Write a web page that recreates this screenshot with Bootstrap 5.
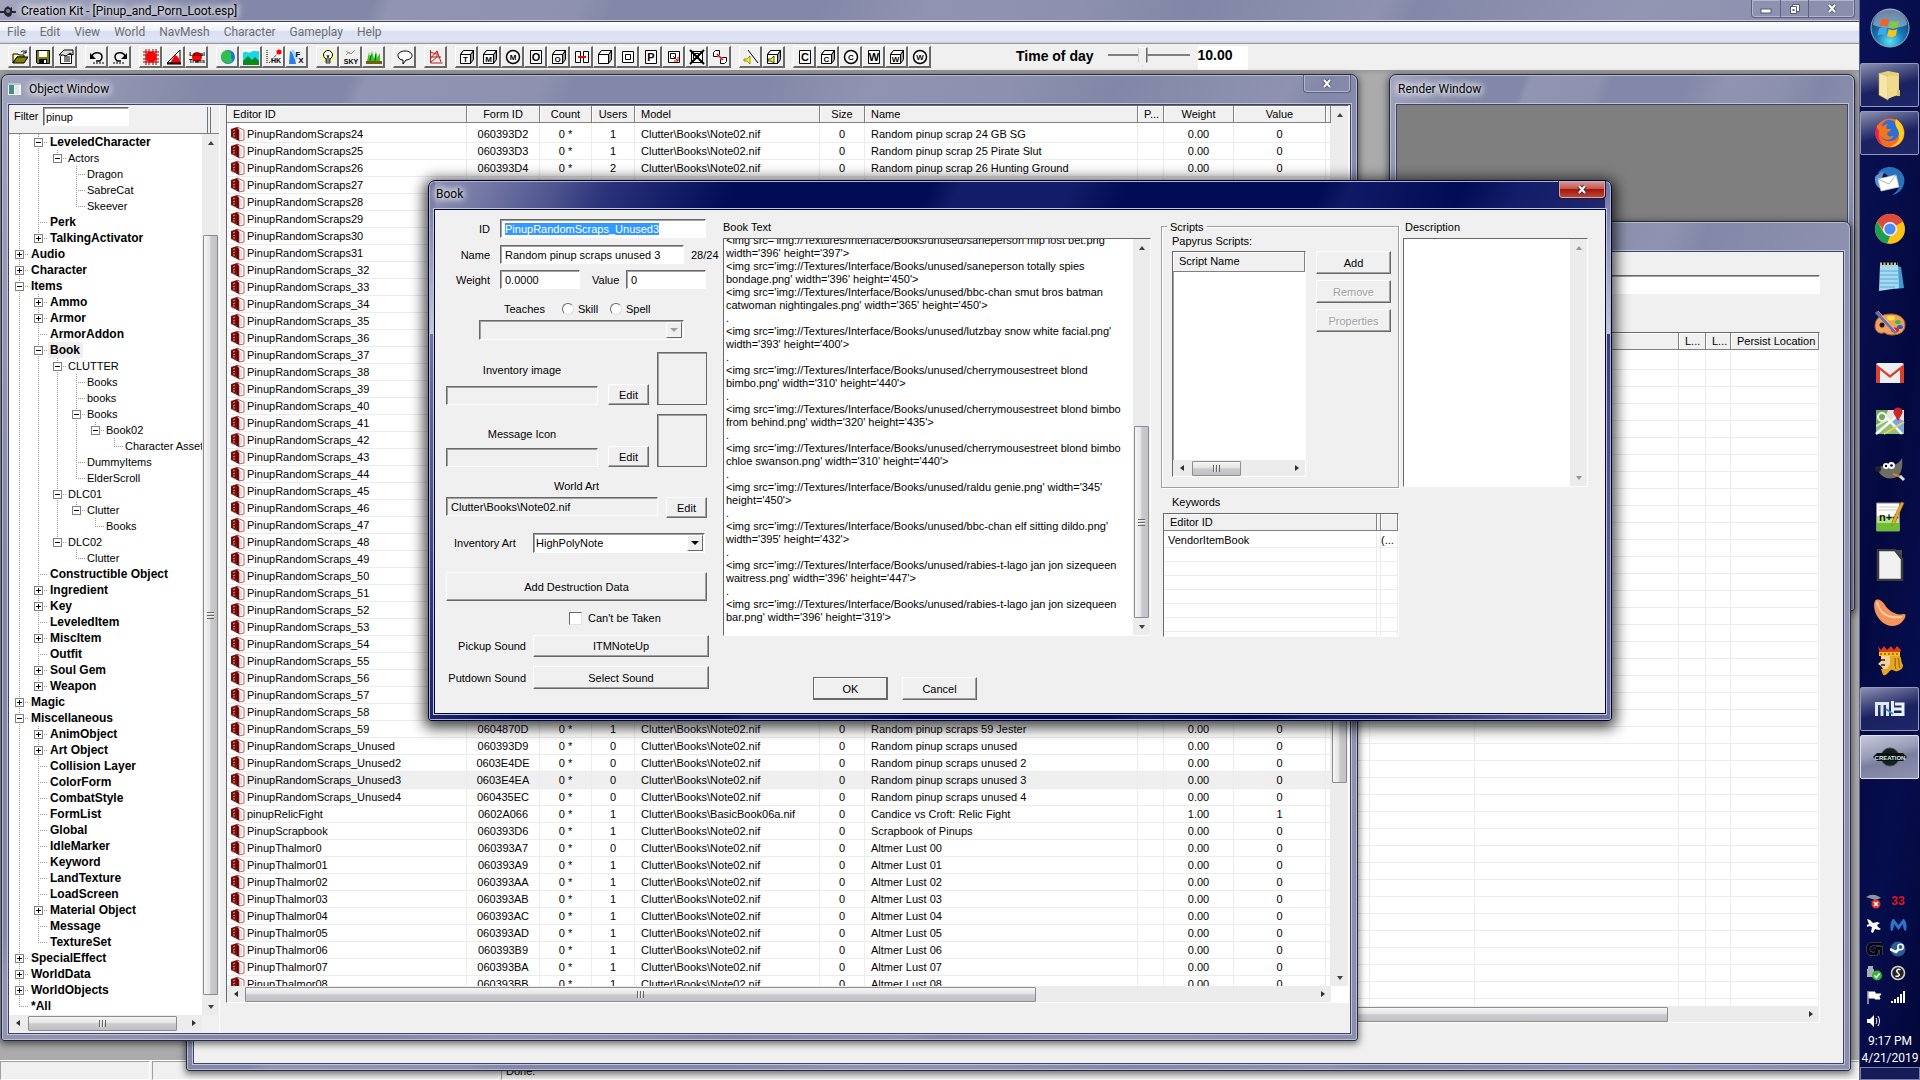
<!doctype html>
<html lang="en">
<head>
<meta charset="utf-8">
<title>Creation Kit</title>
<link href="https://cdn.jsdelivr.net/npm/bootstrap@5.3.0/dist/css/bootstrap.min.css" rel="stylesheet">
<style>
:root{--face:#f0f0f0;--navy:#030a49}
html,body{height:100%}
body{font:11px/16px "Liberation Sans",Arial,sans-serif;color:#000;background:#ababab;overflow:hidden}
button,input,select,textarea{font:inherit;color:inherit}
svg{display:block}
.seg{font-family:Roboto,"Segoe UI",sans-serif;font-size:12px}
.glass{background:linear-gradient(112deg,#a2a5bd 0,#8388a8 12%,#8388a8 20%,#9194b2 21%,#8e92b0 31%,#8388a8 33%,#8488a8 44%,#9093b1 50%,#8d91af 58%,#8287a7 64%,#8f93b1 74%,#8488a8 76%,#9396b3 88%,#8a8eac 100%)}

/* application frame */
.app-title{height:21px;border-bottom:1px solid #c9cbdc}
.app-menu{height:22px;background:linear-gradient(#fff 0,#eef1f9 40%,#dae0f2 45%,#dfe5f4 90%,#c4c9da 100%);border-top:1px solid #3e425c}
.app-menu a{color:#6d6d6d;text-decoration:none;padding:0 7px;line-height:20px}
.app-tools{height:27px;background:var(--face);padding:2px 8px 0;gap:8px;border-top:1px solid #999}
.tb{width:23px;height:22px;padding:2px 3px;border:1px solid;border-color:#fff #696969 #696969 #fff;border-right-width:2px;border-bottom-width:2px;background:var(--face)}
.tb svg{width:16px;height:16px}
.tb text{font:bold 8px "Liberation Sans",Arial,sans-serif;text-anchor:middle}
.tod{font:bold 14px/20px "Liberation Sans",Arial,sans-serif}
.tod-out{width:50px;height:24px;background:#fff;border:0;padding:0 0 6px}
.tod-range{appearance:none;width:82px;height:21px;margin:0;background:linear-gradient(#808080,#808080) 0 8px/100% 2px no-repeat}
.tod-range::-webkit-slider-thumb{appearance:none;width:10px;height:20px;background:var(--face);border:1px solid;border-color:#fff #696969 #696969 #ccc;border-right-width:2px;clip-path:polygon(0 0,100% 0,100% 75%,50% 100%,0 75%)}
.app-work{background:linear-gradient(#999 0,#ababab 5px)}
.app-status{height:20px;background:var(--face);gap:2px;border-top:1px solid #fff}
.app-status div{border:1px solid;border-color:#a0a0a0 #fff #fff #a0a0a0;line-height:18px}

/* caption buttons */
.capt{height:18px;border:1px solid #5d6180;border-top:0;border-radius:0 0 4px 4px;box-shadow:inset 0 0 0 1px #b4b7cb}
.capt button{border:0;background:none;padding:0;height:17px;display:flex;align-items:center;justify-content:center}
.capt button+button{border-left:1px solid #5d6180}
.capt.red{background:linear-gradient(#d99e97 0,#c5564b 45%,#a3170e 50%,#c44a37 100%);border-color:#3b1020}

/* windows */
.win{position:absolute;border:1px solid #262b45;border-radius:7px 7px 3px 3px;box-shadow:inset 0 0 0 1px #b9bccf,0 2px 7px 1px rgba(0,0,0,.55);padding:0 6px 6px;display:flex;flex-direction:column}
.win-title{height:29px;flex:none}
.win-client{flex:1;min-height:0;background:var(--face);border:1px solid #3d4468;outline:1px solid #c3c5d6}
.glow{text-shadow:0 0 6px #fff,0 0 8px #fff,0 0 10px #fff}
#win-object{left:1px;top:74px;width:1357px;height:967px}
#win-cell{left:186px;top:221px;width:1665px;height:850px}
#win-render{left:1389px;top:74px;width:466px;height:537px}
#win-render .win-client{background:#7f7f7f}
#win-book{left:428px;top:180px;width:1184px;height:541px;padding:0 5px 6px;border-color:#00032b;background:
 linear-gradient(#6e74a0,#c5c8dc) 0 0/6px 153px no-repeat,linear-gradient(#6e74a0,#c5c8dc) 100% 0/6px 153px no-repeat,
 linear-gradient(112deg,#8f93b4 0,#6d72a0 5%,#4f5690 9%,#2a327a 13%,#17206a 17%,#020b55 22%,#020b55 36%,#131c68 38%,#131c68 46%,#020b55 50%,#020b55 64%,#101965 66%,#020b55 74%,#131c68 78%,#1c256e 84%,#4f5690 93%,#6d72a0 100%);box-shadow:inset 0 0 0 1px #aeb3d6,0 3px 14px 4px rgba(0,0,0,.72)}
#win-book .win-title{height:28px}
#win-book .win-client{border-color:#020631}

/* sunken and raised edges */
.sunk{border:1px solid;border-color:#696969 #fff #fff #696969;box-shadow:inset 1px 1px 0 #a0a0a0}
.fld{border:1px solid;border-color:#696969 #fff #fff #696969;box-shadow:inset 1px 1px 0 #a0a0a0;background:#fff;height:19px;padding:0 4px;border-radius:0;min-width:0}
.fld:disabled,.fld[readonly].off{background:var(--face);color:#000;opacity:1}
.btn3{border:1px solid;border-color:#fff #696969 #696969 #fff;box-shadow:inset -1px -1px 0 #a0a0a0;background:var(--face);padding:0;line-height:16px}
.btn3:disabled{color:#a0a0a0;text-shadow:1px 1px 0 #fff}
.btn3.main{border-color:#696969;box-shadow:inset -1px -1px 0 #696969,inset 1px 1px 0 #fff}

/* scroll bars */
.sbv{width:17px;flex:none;background:#ececec;display:flex;flex-direction:column;align-items:center}
.sbh{height:16px;flex:none;background:#ececec;display:flex;align-items:center}
.sbv>i,.sbh>i{flex:none;display:flex;align-items:center;justify-content:center}
.sbv>i{height:17px;width:17px}.sbh>i{width:17px;height:16px}
.sbv>i::after,.sbh>i::after{content:"";border:3px solid transparent}
.up::after{border-bottom:4px solid #404040!important;border-top:0!important}
.dn::after{border-top:4px solid #404040!important;border-bottom:0!important}
.lf::after{border-right:4px solid #303030!important;border-left:0!important}
.rt::after{border-left:4px solid #303030!important;border-right:0!important}
.dim>i{opacity:.5}
.thumb{border:1px solid #8d8d8d;border-radius:1px;display:flex;align-items:center;justify-content:center}
.sbv .thumb{width:15px;background:linear-gradient(90deg,#f6f6f6 0,#e4e4e6 45%,#cacace 52%,#c2c2c6 100%)}
.sbh .thumb{height:15px;background:linear-gradient(#f6f6f6 0,#e4e4e6 45%,#cacace 52%,#c2c2c6 100%)}
.thumb::after{content:"";width:7px;height:7px;background:repeating-linear-gradient(90deg,#666 0 1px,#eee 1px 2px,transparent 2px 3px)}
.sbv .thumb::after{background:repeating-linear-gradient(#666 0 1px,#eee 1px 2px,transparent 2px 3px)}
.rest{flex:1}

/* object tree */
.pane-left{width:211px;border-right:1px solid #fff;padding-bottom:2px}
.tree-box{border-top:1px solid #808080;background:#fff}
.tree{padding:0 0 0 1px;overflow:hidden}
.tree div{display:flex;height:16px;white-space:nowrap;line-height:16px}
.tree b{font-size:12px;padding-left:2px}
.tree .lbl:not(b){padding-left:1px}
.tree .sel{background:#efefef;padding-right:3px}
.gd{width:19px;height:16px;flex:none;position:relative}
.gd.v{background:repeating-linear-gradient(#9a9a9a 0 1px,transparent 1px 2px) 9px 0/1px 100% no-repeat}
.gd.l{background:repeating-linear-gradient(#9a9a9a 0 1px,transparent 1px 2px) 9px 0/1px 8px no-repeat}
.gd.h::after{content:"";position:absolute;left:9px;right:1px;top:8px;height:1px;background:repeating-linear-gradient(90deg,#9a9a9a 0 1px,transparent 1px 2px)}
.gd u{position:absolute;z-index:1;left:5px;top:4px;width:9px;height:9px;border:1px solid #808080;background:linear-gradient(#000,#000) 1px 3px/5px 1px no-repeat #fff}
.gd u.p{background:linear-gradient(#000,#000) 1px 3px/5px 1px no-repeat,linear-gradient(#000,#000) 3px 1px/1px 5px no-repeat #fff}

/* list views */
.lv{table-layout:fixed;border-collapse:separate;border-spacing:0;width:100%;background:#fff}
.lv th{height:17px;padding:0 6px;font-weight:400;background:var(--face);border-right:1px solid #808080;border-bottom:1px solid #808080;box-shadow:inset 1px 1px 0 #fff;line-height:15px;white-space:nowrap;overflow:hidden}
.lv td{height:17px;padding:0 6px;line-height:16px;border-right:1px solid #ececec;border-bottom:1px solid #ececec;white-space:nowrap;overflow:hidden}
.lv .gap td{height:3px;padding:0;border-bottom-color:#fff}
.lv .on td{background:#efefef}
.lv .on td:first-child{background:linear-gradient(90deg,#fff 19px,#efefef 19px)}
.lv .ctr{text-align:center}
.lv .ico{padding-left:3px}
.lv .ico svg{display:inline-block;vertical-align:top;margin-right:2px;width:15px;height:16px}
#list-box{width:1123px;height:898px}
#kw td{height:14px;line-height:13px}
#kw .gap td{height:3px;line-height:1px}
.scripts .lv th{height:18px;line-height:19px}

/* book dialog */
.bk{padding:9px 11px 0}
.bk-a{width:277px}.bk-a label,.bk-a .lb{white-space:nowrap}
.bk-a .cap{width:44px;text-align:right;margin-right:10px}
.thumbbox{width:50px;border:1px solid #696969;box-shadow:inset 1px 1px 0 #a0a0a0}
.rdo{appearance:none;width:12px;height:12px;margin:0;border-radius:50%;background:#fff;border:1px solid;border-color:#696969 #ddd #ddd #696969}
.chk{appearance:none;width:13px;height:13px;margin:0;background:#fff;border:1px solid;border-color:#696969 #e3e3e3 #e3e3e3 #696969}
.cmb{position:relative;height:20px}
.cmb select{width:100%;height:20px;appearance:none;padding:0 2px}
.cmb span{position:absolute;right:2px;top:2px;width:16px;height:16px;pointer-events:none;background:var(--face);border:1px solid;border-color:#fff #696969 #696969 #fff;display:flex;align-items:center;justify-content:center}
.cmb span::after{content:"";border:4px solid transparent;border-top-color:#000;border-bottom:0}
.cmb.off span::after{border-top-color:#a0a0a0}
.bk-b{width:428px}
.edit-box{background:#fff;height:398px}
.edit-box textarea{border:0;resize:none;overflow:hidden;white-space:pre;line-height:13px;padding:0 2px;background:#fff;outline:0;flex:1;min-width:0}
.bk-c{width:238px}
.scripts{border:1px solid #a0a0a0;height:262px;position:relative;padding:6px 7px 0 10px;box-shadow:inset 1px 1px 0 #fff,1px 1px 0 #fff}
.scripts legend{position:absolute;left:5px;top:-8px;width:auto;font-size:11px;line-height:16px;background:var(--face);padding:0 3px;margin:0}
#f-id::selection{background:#3399ff;color:#fff}

/* task bar */
.task{width:61px;background:linear-gradient(100deg,#0a1258 0,#03093f 45%,#060d4d 70%,#020738 100%);border-left:1px solid #5b638f;box-shadow:-1px 0 0 #05082c}
.task button{width:59px;height:44px;margin:2px 0;border:1px solid transparent;background:none;padding:0;display:flex;align-items:center;justify-content:center;border-radius:2px}
.task button.run{border-color:#9499b8;background:linear-gradient(165deg,#8d91b0 0,#4b5284 30%,#1a2160 55%,#20276a 100%)}
.task button.cur{border-color:#dfe1ec;background:linear-gradient(165deg,#c6c8d8 0,#9a9db7 40%,#7b7f9f 55%,#8f93ae 100%)}
.tray{display:grid;grid-template-columns:24px 24px;row-gap:8px;padding-left:2px}
.tray span{height:16px;display:flex;align-items:center;justify-content:center}
.clock{color:#fff;line-height:17px}
.show-desk{height:13px;border:1px solid #7a80a8;background:#141b56}
</style>
</head>
<body class="d-flex">

<div class="d-flex flex-column flex-grow-1 position-relative overflow-hidden">
  <header class="app-title glass seg d-flex align-items-start ps-0">
    <svg class="mt-1" width="16" height="14" viewBox="0 0 16 14"><path d="M0 7h4l1-3 3-2 2 2 2-1v4h4v2h-4l-1 3-3 1-3-2-1-2H0z" fill="#23262e"/><circle cx="8" cy="7" r="2" fill="#7d8494"/></svg>
    <span class="glow" style="line-height:22px;margin-left:5px">Creation Kit - [Pinup_and_Porn_Loot.esp]</span>
    <div class="capt d-flex ms-auto me-1">
      <button style="width:28px" aria-label="Minimize"><svg width="12" height="10"><rect x="1" y="5" width="10" height="4" fill="#fff" stroke="#555a75"/></svg></button>
      <button style="width:28px" aria-label="Restore"><svg width="12" height="12"><path d="M3.500 1.500h7v7h-7z" fill="#fff" stroke="#555a75"/><path d="M1.500 3.500h6v7h-6z" fill="#fff" stroke="#555a75"/><path d="M3.500 6h2v2h-2z" fill="#555a75"/></svg></button>
      <button style="width:46px" aria-label="Close"><svg width="12" height="11"><path d="M3 2l6 7M9 2L3 9" stroke="#555a75" stroke-width="4"/><path d="M3 2l6 7M9 2L3 9" stroke="#fff" stroke-width="2"/></svg></button>
    </div>
  </header>
  <nav class="app-menu seg d-flex">
    <a href="#">File</a><a href="#">Edit</a><a href="#">View</a><a href="#">World</a><a href="#">NavMesh</a><a href="#">Character</a><a href="#">Gameplay</a><a href="#">Help</a>
  </nav>
  <div class="app-tools d-flex align-items-start" id="tools">
    <label class="tod order-last" for="tod" style="margin-left:77px">Time of day</label>
    <input class="tod-range order-last" style="margin-left:6px" type="range" id="tod" min="0" max="24" value="10">
    <input class="tod tod-out order-last" value="10.00" aria-label="Hour">
  </div>
  <main class="app-work flex-grow-1"></main>
  <footer class="app-status d-flex"><div style="width:150px"></div><div style="width:347px"></div><div class="flex-grow-1 ps-1">Done.</div></footer>

  <section class="win glass" id="win-render">
    <div class="win-title seg d-flex"><span class="glow" style="line-height:28px;margin-left:2px">Render Window</span></div>
    <div class="win-client"></div>
  </section>

  <section class="win glass" id="win-cell">
    <div class="win-title"></div>
    <div class="win-client ps-2 d-flex flex-column">
      <input class="fld" aria-label="Cell filter" style="width:1618px;margin-top:23px">
      <div class="sunk d-flex flex-column" style="width:1618px;height:691px;margin-top:38px">
        <div class="flex-grow-1 overflow-hidden bg-white"><table class="lv" id="cells"><colgroup><col style="width:1167px"><col style="width:105px"><col style="width:204px"><col style="width:27px"><col style="width:25px"><col></colgroup>
          <thead><tr><th></th><th></th><th></th><th class="ctr">L...</th><th class="ctr">L...</th><th class="ctr">Persist Location</th></tr></thead><tbody></tbody></table></div>
        <div class="sbh"><i class="lf"></i><div class="thumb" style="width:1448px"></div><span class="rest"></span><i class="rt"></i></div>
      </div>
    </div>
  </section>

  <section class="win glass" id="win-object">
    <div class="win-title seg d-flex align-items-start">
      <svg class="me-2 mt-2" width="13" height="12"><path d="M0 0h13v12H0z" fill="#f4f4f4"/><path d="M0 0h13v2H0z" fill="#b9c6d6"/><path d="M1 2h5v9H1z" fill="#3f8f83"/><path d="M7 2h4v9H7z" fill="#dfe7ea"/></svg>
      <span class="glow" style="line-height:28px">Object Window</span>
      <div class="capt ms-auto"><button style="width:46px" aria-label="Close"><svg width="12" height="11"><path d="M3 2l6 7M9 2L3 9" stroke="#555a75" stroke-width="4"/><path d="M3 2l6 7M9 2L3 9" stroke="#fff" stroke-width="2"/></svg></button></div>
    </div>
    <div class="win-client d-flex">
      <div class="pane-left d-flex flex-column">
        <div class="d-flex align-items-start" style="height:28px;padding:2px 0 0 5px">
          <label for="flt" style="width:29px;line-height:18px">Filter</label><input class="fld" id="flt" value="pinup" style="width:86px;padding:0 2px">
          <span class="ms-auto me-2 border-start border-end border-secondary h-100" style="width:4px"></span>
        </div>
        <div class="tree-box flex-grow-1 d-flex" style="min-height:0">
          <div class="tree flex-grow-1" id="tree"></div>
          <div class="sbv"><i class="up"></i><div class="thumb" style="height:760px;margin-top:84px"></div><span class="rest"></span><i class="dn"></i></div>
        </div>
        <div class="sbh" style="margin-right:17px"><i class="lf"></i><div class="thumb" style="width:149px;margin-left:2px"></div><span class="rest"></span><i class="rt"></i></div>
      </div>
      <div class="sunk d-flex flex-column bg-white" id="list-box" style="margin-left:6px">
        <div class="d-flex flex-grow-1" style="min-height:0">
          <div class="flex-grow-1 overflow-hidden"><table class="lv" id="forms"><colgroup><col style="width:240px"><col style="width:73px"><col style="width:52px"><col style="width:43px"><col style="width:185px"><col style="width:45px"><col style="width:273px"><col style="width:26px"><col style="width:70px"><col style="width:92px"><col></colgroup>
            <thead><tr><th>Editor ID</th><th class="ctr">Form ID</th><th class="ctr">Count</th><th class="ctr">Users</th><th>Model</th><th class="ctr">Size</th><th>Name</th><th>P...</th><th class="ctr">Weight</th><th class="ctr">Value</th><th></th></tr></thead><tbody></tbody></table></div>
          <div class="sbv"><i class="up"></i><div class="thumb" style="height:483px;margin-top:177px"></div><span class="rest"></span><i class="dn"></i></div>
        </div>
        <div class="sbh" style="margin-right:17px"><i class="lf"></i><div class="thumb" style="width:791px;margin-left:1px"></div><span class="rest"></span><i class="rt"></i></div>
      </div>
    </div>
  </section>

  <section class="win" id="win-book">
    <div class="win-title seg d-flex align-items-start ps-0">
      <span class="glow" style="line-height:27px;margin-left:2px">Book</span>
      <div class="capt red ms-auto"><button style="width:46px" aria-label="Close"><svg width="12" height="11"><path d="M3 2l6 7M9 2L3 9" stroke="#4a2a3a" stroke-width="4"/><path d="M3 2l6 7M9 2L3 9" stroke="#fff" stroke-width="2"/></svg></button></div>
    </div>
    <form class="win-client bk d-flex align-items-start" onsubmit="return false">
      <div class="bk-a">
        <div class="d-flex align-items-center"><label class="cap" for="f-id">ID</label><input class="fld" id="f-id" value="PinupRandomScraps_Unused3" style="width:206px"></div>
        <div class="d-flex align-items-center" style="margin-top:7px"><label class="cap" for="f-name">Name</label><input class="fld" id="f-name" value="Random pinup scraps unused 3" style="width:184px"><span class="lb" style="margin-left:7px">28/24</span></div>
        <div class="d-flex align-items-center" style="margin-top:6px"><label class="cap" for="f-w">Weight</label><input class="fld" id="f-w" value="0.0000" style="width:80px"><label for="f-v" style="margin-left:12px;width:34px">Value</label><input class="fld" id="f-v" value="0" style="width:80px"></div>
        <div class="d-flex align-items-center" style="margin:12px 0 3px 58px"><span class="lb" style="width:58px">Teaches</span><input class="rdo" type="radio" name="teach" id="t1"><label for="t1" style="width:36px;padding-left:4px">Skill</label><input class="rdo" type="radio" name="teach" id="t2"><label for="t2" style="padding-left:4px">Spell</label></div>
        <div class="cmb off" style="width:205px;margin-left:33px"><select class="fld" disabled aria-label="Taught skill or spell"><option></option></select><span></span></div>
        <div class="d-flex align-items-end" style="margin-top:12px;height:53px"><div style="width:152px"><label class="d-block text-center mb-2" for="f-inv">Inventory image</label><input class="fld off w-100 d-block" id="f-inv" readonly></div><button class="btn3" style="width:41px;height:21px;margin:0 8px 0 10px">Edit</button><div class="thumbbox h-100"></div></div>
        <div class="d-flex align-items-end" style="margin-top:9px;height:53px"><div style="width:152px"><label class="d-block text-center" for="f-msg" style="margin-bottom:6px">Message Icon</label><input class="fld off w-100 d-block" id="f-msg" readonly></div><button class="btn3" style="width:41px;height:21px;margin:0 8px 0 10px">Edit</button><div class="thumbbox h-100"></div></div>
        <label class="d-block text-center" for="f-art" style="width:261px;margin:11px 0 3px">World Art</label>
        <div class="d-flex"><input class="fld off" id="f-art" readonly value="Clutter\Books\Note02.nif" style="width:212px"><button class="btn3" style="width:41px;height:21px;margin-left:8px">Edit</button></div>
        <div class="d-flex align-items-center" style="margin-top:15px;padding-left:8px"><label for="f-ia" style="width:79px">Inventory Art</label><div class="cmb" style="width:172px"><select class="fld" id="f-ia"><option>HighPolyNote</option></select><span></span></div></div>
        <button class="btn3" style="width:261px;height:29px;margin-top:19px">Add Destruction Data</button>
        <div class="d-flex align-items-center" style="margin:9px 0 9px 123px"><input class="chk" type="checkbox" id="f-ct"><label for="f-ct" style="padding-left:6px">Can't be Taken</label></div>
        <div class="d-flex align-items-center"><span class="lb text-end" style="width:80px">Pickup Sound</span><button class="btn3" style="width:176px;height:22px;margin-left:7px">ITMNoteUp</button></div>
        <div class="d-flex align-items-center" style="margin-top:9px"><span class="lb text-end" style="width:80px">Putdown Sound</span><button class="btn3" style="width:176px;height:23px;margin-left:7px">Select Sound</button></div>
      </div>
      <div class="bk-b">
        <label for="f-txt" class="d-block">Book Text</label>
        <div class="edit-box sunk d-flex" style="margin-top:3px"><textarea id="f-txt" spellcheck="false">&lt;img src='img://Textures/Interface/Books/unused/saneperson mlp lost bet.png'
width='396' height='397'&gt;
&lt;img src='img://Textures/Interface/Books/unused/saneperson totally spies
bondage.png' width='396' height='450'&gt;
&lt;img src='img://Textures/Interface/Books/unused/bbc-chan smut bros batman
catwoman nightingales.png' width='365' height='450'&gt;
.
&lt;img src='img://Textures/Interface/Books/unused/lutzbay snow white facial.png'
width='393' height='400'&gt;
.
&lt;img src='img://Textures/Interface/Books/unused/cherrymousestreet blond
bimbo.png' width='310' height='440'&gt;
.
&lt;img src='img://Textures/Interface/Books/unused/cherrymousestreet blond bimbo
from behind.png' width='320' height='435'&gt;
.
&lt;img src='img://Textures/Interface/Books/unused/cherrymousestreet blond bimbo
chloe swanson.png' width='310' height='440'&gt;
.
&lt;img src='img://Textures/Interface/Books/unused/raldu genie.png' width='345'
height='450'&gt;
.
&lt;img src='img://Textures/Interface/Books/unused/bbc-chan elf sitting dildo.png'
width='395' height='432'&gt;
.
&lt;img src='img://Textures/Interface/Books/unused/rabies-t-lago jan jon sizequeen
waitress.png' width='396' height='447'&gt;
.
&lt;img src='img://Textures/Interface/Books/unused/rabies-t-lago jan jon sizequeen
bar.png' width='396' height='319'&gt;

</textarea><div class="sbv"><i class="up"></i><div class="thumb" style="height:192px;margin-top:170px"></div><span class="rest"></span><i class="dn"></i></div></div>
        <div class="d-flex" style="margin:41px 0 0 90px;gap:14px"><button class="btn3 main" style="width:75px;height:23px">OK</button><button class="btn3" style="width:75px;height:23px">Cancel</button></div>
      </div>
      <div class="bk-c" style="margin:7px 4px 0 10px">
        <fieldset class="scripts"><legend>Scripts</legend>
          <span>Papyrus Scripts:</span>
          <div class="d-flex align-items-start" style="gap:10px;margin-top:2px">
            <div class="sunk bg-white d-flex flex-column" style="width:134px;height:226px"><table class="lv"><thead><tr><th>Script Name</th></tr></thead></table><div class="sbh mt-auto"><i class="lf"></i><div class="thumb" style="width:49px;margin-left:2px"></div><span class="rest"></span><i class="rt"></i></div></div>
            <div class="d-flex flex-column" style="gap:6px"><button class="btn3" style="width:75px;height:23px">Add</button><button class="btn3" disabled style="width:75px;height:23px">Remove</button><button class="btn3" disabled style="width:75px;height:23px">Properties</button></div>
          </div>
        </fieldset>
        <div style="margin:6px 0 3px 11px">Keywords</div>
        <div class="sunk bg-white overflow-hidden" style="height:124px;margin-left:2px"><table class="lv" id="kw"><colgroup><col style="width:213px"><col style="width:4px"><col></colgroup><thead><tr><th>Editor ID</th><th class="p-0"></th><th></th></tr></thead><tbody></tbody></table></div>
      </div>
      <div style="width:185px">
        <label for="f-d" class="d-block" style="margin-left:2px">Description</label>
        <div class="edit-box sunk d-flex" style="margin-top:3px;height:249px"><textarea id="f-d"></textarea><div class="sbv dim"><i class="up"></i><span class="rest"></span><i class="dn"></i></div></div>
      </div>
    </form>
  </section>
</div>

<aside class="task d-flex flex-column">
  <div class="d-flex justify-content-center" style="height:61px;padding-top:8px">
    <svg width="40" height="40" viewBox="0 0 40 40"><defs><radialGradient id="orb" cx=".5" cy=".85" r=".8"><stop offset="0" stop-color="#5fe0f4"/><stop offset=".45" stop-color="#1779b4"/><stop offset="1" stop-color="#13305e"/></radialGradient></defs><circle cx="20" cy="20" r="19" fill="url(#orb)" stroke="#8fb6d3"/><path d="M3 17a17 16 0 0 1 34 0c-9 4-25 4-34 0z" fill="#dfeaf4" opacity=".45"/><path d="M11 12c3-2 6-1.500 8 0l-1.500 7c-2-1.500-5-2-8 0z" fill="#f0632a"/><path d="M20.500 12.500c3 2 6 1.500 8.500 0L27.500 19.500c-3 1.500-6 1.500-8.500 0z" fill="#8cc63e"/><path d="M9 20.500c3-1.800 6-1.500 8 0l-1.500 7c-2.500-1.500-5-1.500-8 0z" fill="#3fa9e8"/><path d="M18.800 21c2.500 1.800 6 1.500 8.500 0l-1.800 7c-3 1.600-6 1.500-8.300 0z" fill="#fcc419"/></svg>
  </div>
  <button class="run" aria-label="Explorer"><svg width="26" height="32" viewBox="0 0 26 32"><path d="M3 4l8-2 11 2v22l-11 3z" fill="#e7cf7a"/><path d="M2 4l9 3v24l-9-5z" fill="#f6e7a9" stroke="#c9ad57" stroke-width=".6"/><path d="M11 7h10v18l-10 5z" fill="#f0da8e"/><path d="M20 21h3v6h-3z" fill="#dcc06a"/></svg></button>
  <button class="run" aria-label="Firefox"><svg width="32" height="32" viewBox="0 0 32 32"><circle cx="16" cy="16" r="14.500" fill="#ff6a1f"/><path d="M14 3c8 0 11 5 11 12s-6 10-11 9c-5 0-8-4-8-8 0-6 3-12 8-13z" fill="#2a6fd6"/><path d="M22 2c6 4 8 9 8 15-1 8-7 13-14 13 7-3 10-7 9-13 0-6-6-8-3-15z" fill="#ffcf24"/><path d="M3 8c3 2 4 1 6 1 1-1 3-2 5-2-2 2-2 4-1 5h4c0 2-3 3-4 4l1 3c2 1 4 0 6 0-2 3-6 5-10 3-5-3-7-8-7-14z" fill="#f5741e"/><path d="M2 9c-2 8 0 15 7 19-4-5-5-9-4-14z" fill="#e3215c"/></svg></button>
  <button aria-label="Thunderbird"><svg width="32" height="32" viewBox="0 0 32 32"><path d="M4 8C10-1 26 0 30 12c2 9-4 17-12 18 5-3 8-7 7-11L10 8z" fill="#2a72b8"/><path d="M1 12c2-3 5-5 9-5l-3 9 3 9c-6-1-10-6-9-13z" fill="#5b92ca"/><path d="M4 14l18-4 3 12-18 4z" fill="#fff" stroke="#c6d3e2" stroke-width=".7"/><path d="M4 14l11 5 7-9" fill="none" stroke="#8ba1b8" stroke-width=".8"/></svg></button>
  <button aria-label="Chrome"><svg width="32" height="32" viewBox="0 0 32 32"><circle cx="16" cy="16" r="15" fill="#fbc116"/><path d="M16 16L3 8.500A15 15 0 0 1 29 8.500z" fill="#dd4b3e"/><path d="M16 9h13.500A15 15 0 0 0 3 8.500l7 9z" fill="#dd4b3e"/><path d="M3 8.500l7 11.500 6 3-3 7.700A15 15 0 0 1 3 8.500z" fill="#1c9e57"/><circle cx="16" cy="16" r="7" fill="#f4f4f4"/><circle cx="16" cy="16" r="5.600" fill="#4c8bf5"/></svg></button>
  <button aria-label="Notepad"><svg width="30" height="32" viewBox="0 0 30 32"><path d="M18 4l8 2 3 21-9 1z" fill="#3f9ad0"/><path d="M5 4h18l1 23-20 3z" fill="#a4dbf3"/><path d="M5 10h18M5 14h18M5 18h18M5 22h18M5 26h15" stroke="#4c9cc9" stroke-width=".8"/><path d="M5 3h18" stroke="#d9c05c" stroke-width="3" stroke-dasharray="2 1.500"/></svg></button>
  <button aria-label="Paint"><svg width="32" height="30" viewBox="0 0 32 30"><path d="M1 16C1 7 9 4 17 4s14 4 14 11-6 10-13 10-6-3-9-2-8-1-8-7z" fill="#f0a160" stroke="#a7602c"/><ellipse cx="17" cy="8" rx="4" ry="2.500" fill="#ffe13a"/><ellipse cx="24" cy="12" rx="3" ry="2" fill="#3fbf3a"/><ellipse cx="26" cy="17" rx="3" ry="2" fill="#3156d8"/><ellipse cx="21" cy="20" rx="4" ry="2.500" fill="#d82420"/><circle cx="8" cy="15" r="2.500" fill="#211"/><path d="M2 2l20 21" stroke="#6c6fae" stroke-width="3"/><path d="M4 1l18 20" stroke="#e5c48a" stroke-width="1"/></svg></button>
  <button aria-label="Gmail"><svg width="28" height="22" viewBox="0 0 28 22"><rect y="1" width="28" height="20" rx="2" fill="#eceff1"/><path d="M0 21V2l14 11L28 2v19h-4V8l-10 8L4 8v13z" fill="#d8402f"/></svg></button>
  <button aria-label="Maps"><svg width="32" height="28" viewBox="0 0 32 28"><path d="M2 3h28v24H2z" fill="#e6e3da"/><path d="M2 3h12l-4 10-8 5z" fill="#74a95b"/><path d="M2 20l13-7 15 12v2H2z" fill="#8ec07a"/><path d="M14 14l16 12V14l-9-4z" fill="#7ba8de"/><path d="M2 27L24 8M13 11l15 16" stroke="#fff" stroke-width="2.500"/><path d="M10 27L30 15" stroke="#f2cf55" stroke-width="2"/><circle cx="8" cy="10" r="4" fill="none" stroke="#f5f5f5" stroke-width="2"/><path d="M24 14l-4-7a4.500 4.500 0 1 1 8 0z" fill="#c9252b"/></svg></button>
  <button aria-label="GIMP"><svg width="32" height="26" viewBox="0 0 32 26"><path d="M4 11c6 0 8-4 12-3s8 1 12-6c1 8 0 18-8 20-9 2-14-3-17-9z" fill="#6f6c62"/><circle cx="4" cy="13" r="3" fill="#222"/><circle cx="12" cy="10" r="3" fill="#fff"/><circle cx="17.500" cy="9.500" r="3.400" fill="#fff"/><circle cx="12" cy="10" r="1.200"/><circle cx="17.500" cy="9.500" r="1.300"/><path d="M19 18l8 3" stroke="#c58a35" stroke-width="2"/><path d="M26 20l4 4" stroke="#ddd" stroke-width="3"/></svg></button>
  <button aria-label="Notepad++"><svg width="30" height="32" viewBox="0 0 30 32"><path d="M1.500 2h23v28h-23z" fill="#fdfdfd" stroke="#888"/><path d="M2 22h22v8H2z" fill="#6cc22e"/><path d="M2 15h22v7H2z" fill="#b4e28c"/><path d="M4 6h18M4 9h18" stroke="#ccc"/><text x="4" y="20" font-family="Liberation Sans,sans-serif" font-size="11" font-weight="700" fill="#111">n++</text><path d="M29 2l-9 20-3 3 0-4 9-20z" fill="#e9a52c" stroke="#8d6012" stroke-width=".5"/></svg></button>
  <button aria-label="LibreOffice"><svg width="28" height="32" viewBox="0 0 28 32"><path d="M2 1h17l7 9v21H2z" fill="#f1f1f1" stroke="#3c3c3c" stroke-width="2.500"/><path d="M19 1h7v7z" fill="#4a4a4a"/></svg></button>
  <button aria-label="Tangerine"><svg width="34" height="32" viewBox="0 0 34 32"><path d="M2 4C4 1 9 3 12 8s10 11 19 9c3 0 1 5-2 8-5 5-14 6-21-1S0 8 2 4z" fill="#f5935a"/><path d="M4 5c2 9 9 17 25 15" fill="none" stroke="#ffd1a8" stroke-width="2"/></svg></button>
  <button aria-label="Solitaire"><svg width="30" height="32" viewBox="0 0 30 32"><path d="M3 1l3 4 3-4 3 4 4-4 3 4 3-4 4 4-2 5H5z" fill="#e23a1e"/><path d="M4 7h21v4H4z" fill="#f7c21b"/><path d="M5 9h19" stroke="#7a1a08" stroke-width="1" stroke-dasharray="2 2"/><path d="M6 11h12v9l-4 4H8l-2-3-3-2 3-3z" fill="#f3d2a0"/><path d="M15 11h10c2 4 1 6 3 9 0 4-3 5-5 6-4 1-5-2-7-1-3 2-4 6-8 5l-2-6h6l3-5z" fill="#e8a722"/><path d="M20 13c1 4-1 7 1 11M23 13c2 4 0 6 2 10" fill="none" stroke="#8a5408"/><path d="M6 15h4M6 20h4" stroke="#3b1d08" stroke-width="1.500"/></svg></button>
  <button class="run" aria-label="Mod Organizer"><svg width="32" height="18" viewBox="0 0 32 18"><path d="M2.500 16V3.500h11V16M8 3v13" fill="none" stroke="#dcebf3" stroke-width="3"/><path d="M18.500 1v13.500h10.500V4h-8M18 9h10" fill="none" stroke="#e8f2f8" stroke-width="3"/><path d="M12 9l7 5" stroke="#2f8fc8" stroke-width="2"/></svg></button>
  <button class="cur" aria-label="Creation Kit"><svg width="34" height="22" viewBox="0 0 34 22"><circle cx="17" cy="11" r="9" fill="#14201f" stroke="#3b4a49"/><path d="M0 11l4-4h26l4 4-4 4H4z" fill="#0b1112"/><text x="17" y="14" text-anchor="middle" font-family="Liberation Sans,sans-serif" font-size="6" font-weight="700" fill="#d6e8e2">CREATION</text></svg></button>
  <div class="tray mt-auto mb-1">
    <span><svg width="16" height="16"><path d="M0 4c6-4 11-2 15 1L4 9l8-1z" fill="#8c94a4"/><circle cx="10" cy="11" r="4.500" fill="#d8302b"/><path d="M8 9l4 4M12 9l-4 4" stroke="#fff" stroke-width="1.500"/></svg></span>
    <span style="color:#e0141c;font-size:12px;font-weight:700">33</span>
    <span><svg width="16" height="16"><path d="M1 2l3 1 3 3 4-1 3 1-3 2 1 2 3 2-2 1-4-1-2 4-2-1 1-5-3-1-2 1 0-2 2-1z" fill="#fff"/></svg></span>
    <span><svg width="17" height="14"><path d="M1 13C-1 5 3 0 4 1l4.500 6L13 1c1-1 5 4 3 12-2 0-3-3-3-7l-4.500 6L4 6c0 4-1 7-3 7z" fill="#2e74c8"/></svg></span>
    <span><svg width="17" height="16"><path d="M15 3H7C3 3 2 6 2 8s1 5 5 5h3l1-4H8M10 7h5v7" fill="none" stroke="#6b6f88" stroke-width="4"/><path d="M15 3H7C3 3 2 6 2 8s1 5 5 5h3l1-4H8M10 7h5v7" fill="none" stroke="#000" stroke-width="3"/></svg></span>
    <span><svg width="16" height="16"><circle cx="8" cy="8" r="7.500" fill="#2a5f94"/><circle cx="10.500" cy="6" r="2.700" fill="none" stroke="#fff" stroke-width="1.500"/><path d="M0 8l6 3 3-3" stroke="#fff" stroke-width="2.500" fill="none"/></svg></span>
    <span><svg width="16" height="16"><path d="M2 1h5v3h1v8H1V4h1z" fill="#a9adb5"/><circle cx="11" cy="10.500" r="5" fill="#3daf35"/><path d="M8.500 10.500l2 2 3-4" stroke="#fff" stroke-width="1.600" fill="none"/></svg></span>
    <span><svg width="16" height="16"><circle cx="8" cy="8" r="6.500" fill="#222" stroke="#d5d5d5" stroke-width="1.500"/><path d="M10.500 5c-3-2-5 1-2.500 3s1 4-2.500 3" fill="none" stroke="#fff" stroke-width="1.500"/></svg></span>
    <span><svg width="16" height="16"><path d="M2 2v13M3 3h6v6H3zM9 5h6l-2 2.500 1 2.500H9z" fill="#fff" stroke="#fff"/></svg></span>
    <span><svg width="16" height="14"><path d="M1 11h2v2H1zM4 9h2v4H4zM7 7h2v6H7zM10 4h2v9h-2zM13 1h2v12h-2z" fill="#fff"/></svg></span>
    <span><svg width="16" height="16"><path d="M1 6h3l4-4v12l-4-4H1z" fill="#fff"/><path d="M10 5c1 2 1 4 0 6M12 3c2 3 2 7 0 10" fill="none" stroke="#fff"/></svg></span>
  </div>
  <div class="clock seg text-center">9:17 PM<br>4/21/2019</div>
  <div class="show-desk"></div>
</aside>

<script src="https://cdn.jsdelivr.net/npm/bootstrap@5.3.0/dist/js/bootstrap.bundle.min.js"></script>
<script>
// tool bar glyphs
const box = c => `<path d="M2.500 1.500h11v13h-11z" fill="#fff" stroke="#000"/><text x="8" y="12" style="font-size:11px">${c}</text>`;
const cube = (c, extra = '') => `<path d="M4.500 1.500h10v9l-3 4v-9l3-4M1.500 5.500l3-4M11.500 5.500l3-4" fill="#999" stroke="#000"/><path d="M4.500 1.500h10l-3 4h-10z" fill="#fff" stroke="#000"/><path d="M1.500 5.500h10v9h-10z" fill="#fff" stroke="#000"/><text x="6.500" y="13">${c}</text>${extra}`;
const ring = c => `<circle cx="8" cy="8" r="6.500" fill="#fff" stroke="#000" stroke-width="1.500"/><text x="8" y="11">${c}</text>`;
const groups = [
 ['<path d="M1 5h5l1 1h5v2H5l-4 6z" fill="#ffff80" stroke="#000"/><path d="M1 14l4-6h11l-4 6z" fill="#808000" stroke="#000"/><path d="M9 3c2-2 4-1 5 1M14 1v3h-3" fill="none" stroke="#000"/>',
  '<path d="M1.500 1.500h13v13h-12l-1-1z" fill="#808000" stroke="#000"/><path d="M4 2h8v6H4z" fill="#fff"/><path d="M4 10h8v5H4z" fill="#000"/><path d="M9 11h2v3H9z" fill="#fff"/>',
  '<path d="M4.500 5.500h9v9h-11v-7z" fill="#fff" stroke="#000"/><path d="M6 8h6M6 10h6M6 12h6" stroke="#000"/><path d="M1 6l5-5h9v5l-3-2-4 3-3-1z" fill="#ddd" stroke="#000"/>'],
 ['<path d="M3 7c2-5 10-4 10 1 0 2-1 3-2 4H7" fill="none" stroke="#000" stroke-width="1.500"/><path d="M1 4v6h6z"/><path d="M4 14h11" stroke="#000" stroke-dasharray="2 1"/>',
  '<path d="M13 7C11 2 3 3 3 8c0 2 1 3 2 4h4" fill="none" stroke="#000" stroke-width="1.500"/><path d="M15 4v6H9z"/><path d="M1 14h11" stroke="#000" stroke-dasharray="2 1"/>'],
 ['<path d="M3 0v16M6 0v16M10 0v16M13 0v16M0 3h16M0 6h16M0 10h16M0 13h16" stroke="#900"/><circle cx="8" cy="8" r="5.500" fill="#f00"/>',
  '<path d="M1 14L14 1v13z" fill="#fff" stroke="#000"/><path d="M4 14l5-8c3 1 5 4 5 8z" fill="#f00"/><path d="M1 14.500h14" stroke="#000" stroke-width="2"/>',
  '<circle cx="8" cy="8" r="5" fill="#f00"/><text x="8" y="7" style="font-size:6px">Local</text><text x="8" y="14" style="font-size:6px">Trans</text>'],
 ['<circle cx="8" cy="8" r="7" fill="#1d74d8"/><path d="M3 3c4-3 7-1 8 1s-1 4 1 6-2 4-4 4c-4 0-7-3-7-6s1-4 2-5z" fill="#2fc04a"/>',
  '<path d="M0 0h16v16H0z" fill="#12d8e8"/><path d="M0 4c3-3 5 1 8-1s5 0 8-1V0H0z" fill="#fff"/><path d="M0 12l5-5 4 4 3-3 4 4v4H0z" fill="#0b8a1c"/>',
  '<path d="M1 1v14M3 14L12 4" stroke="#000" stroke-dasharray="1 1"/><circle cx="13" cy="3" r="2.500" fill="#f00"/><text x="10" y="14" style="font-size:7px">HK</text>',
  '<path d="M1 2c4 2 3 6 5 8l1 5H0z" fill="#2a7fe0"/><path d="M3 1c3 2 3 7 5 9" fill="none" stroke="#8fd0ff" stroke-width="2"/><text x="9" y="8">F</text><text x="12" y="14">X</text>'],
 ['<circle cx="8" cy="7" r="7" fill="#ffff9a"/><circle cx="8" cy="6" r="4.500" fill="#fff" stroke="#000"/><path d="M6 10h4v4H6zM6 12h4M7 6l1 3 1-3" fill="#ddd" stroke="#000" stroke-width=".8"/>',
  '<path d="M3 6l3-3 2 2 4-4M3 2l4 3" stroke="#999" fill="none"/><text x="8" y="15" style="font-size:7px">SKY</text>',
  '<path d="M1 12l2-9 1 6 2-7 2 8 2-8 1 7 3-5v8z" fill="#2fc41e"/><path d="M0 12h16v3H0z" fill="#7a5a14"/><path d="M4 12l1-6M9 12l1-7" stroke="#0a6010"/>'],
 ['<path d="M8 2c4 0 7 2 7 4.500S12 11 9 11l-3 4v-4C3 11 1 9 1 6.500S4 2 8 2z" fill="#fff" stroke="#000"/>'],
 ['<path d="M2.500 1v13h12M2 10L9 2l4 11M3 8l10 0M2 3l6 2M9 2v6L3 13" fill="none" stroke="#c01818"/>'],
 [cube('T'), cube('M'), ring('M'), box('O'), cube('O'),
  '<path d="M1.500 2.500h5v11h-5zM9.500 2.500h5v11h-5z" fill="#fff" stroke="#000"/><path d="M4 8h8" stroke="#f00" stroke-width="2"/>',
  cube(''), '<path d="M2.500 2.500h11v11h-11zM5.500 5.500h5v5h-5z" fill="#fff" stroke="#000"/>', box('P'),
  '<path d="M2.500 2.500h11v11h-11zM4.500 4.500h5v5h-5z" fill="#fff" stroke="#000"/><path d="M7 7l5 5M12 8v4H8" stroke="#d00" fill="none"/>',
  '<path d="M2.500 2.500h11v11h-11zM4.500 4.500h5v5h-5z" fill="#fff" stroke="#000"/><path d="M8 8l4 4" stroke="#d00"/><path d="M1 1l14 14M15 1L1 15" stroke="#000" stroke-width="2"/>',
  '<path d="M1.500 3.500l2-2h4v4l-2 2h-4zM8.500 10.500l2-2h4v4l-2 2h-4z" fill="#fff" stroke="#000"/><path d="M5 5l6 6" stroke="#d00" stroke-width="1.500"/>'],
 ['<path d="M5 1l10 13" stroke="#000"/><path d="M1 10h3l3-3v8l-3-3H1z" fill="#ff0" stroke="#660" stroke-width=".7"/>',
  cube('', '<path d="M2 10h3l3-3v7l-3-2H2z" fill="#ff0" stroke="#000" stroke-width=".7"/>')],
 [box('C'), cube('C'), ring('C'), box('W'), cube('W'), ring('W')]
];
document.getElementById('tools').insertAdjacentHTML('afterbegin', groups.map(g =>
  '<div class="d-flex">' + g.map(s => `<button class="tb"><svg viewBox="0 0 16 16">${s}</svg></button>`).join('') + '</div>').join(''));

// object tree: level, box sign, label; levels 0 and 1 are bold
const tree = `1-LeveledCharacter|2-Actors|3 Dragon|3 SabreCat|3 Skeever|1 Perk|1+TalkingActivator|0+Audio|0+Character|0-Items|1+Ammo|1+Armor|1 ArmorAddon|1-Book|2-CLUTTER|3 Books|3 books|3-Books|4-Book02|5 Character Asset|3 DummyItems|3 ElderScroll|2-DLC01|3-Clutter|4 Books|2-DLC02|3 Clutter|1 Constructible Object|1+Ingredient|1+Key|1 LeveledItem|1+MiscItem|1 Outfit|1+Soul Gem|1+Weapon|0+Magic|0-Miscellaneous|1+AnimObject|1+Art Object|1 Collision Layer|1 ColorForm|1 CombatStyle|1 FormList|1 Global|1 IdleMarker|1 Keyword|1 LandTexture|1 LoadScreen|1+Material Object|1 Message|1 TextureSet|0+SpecialEffect|0+WorldData|0+WorldObjects|0 *All`
  .split('|').map(s => ({l: +s[0], k: s[1], t: s.slice(2)}));
const more = (i, k) => { for (let j = i + 1; j < tree.length; j++) { if (tree[j].l === k) return true; if (tree[j].l < k) return false; } return false; };
document.getElementById('tree').innerHTML = tree.map((n, i) => {
  let h = '';
  for (let k = 0; k < n.l; k++) h += `<span class="gd ${more(i, k) ? 'v' : ''}"></span>`;
  h += `<span class="gd h ${more(i, n.l) ? 'v' : 'l'}">${n.k === ' ' ? '' : `<u class="${n.k === '+' ? 'p' : ''}"></u>`}</span>`;
  const tag = n.l < 2 ? 'b' : 'span';
  return `<div>${h}<${tag} class="lbl ${n.t === 'Book' ? 'sel' : ''}">${n.t}</${tag}></div>`;
}).join('');

// form list: editor id, form id, users, name, then optional model, weight, value
const rows = [['PinupRandomScraps24','060393D2',1,'Random pinup scrap 24 GB SG'],['PinupRandomScraps25','060393D3',1,'Random pinup scrap 25 Pirate Slut'],['PinupRandomScraps26','060393D4',2,'Random pinup scrap 26 Hunting Ground']];
for (let n = 27; n < 59; n++) rows.push(['PinupRandomScraps' + (n > 31 ? '_' : '') + n]);
rows.push(['PinupRandomScraps_59','0604870D',1,'Random pinup scraps 59 Jester'],['PinupRandomScraps_Unused','060393D9',0,'Random pinup scraps unused'],['PinupRandomScraps_Unused2','0603E4DE',0,'Random pinup scraps unused 2'],['PinupRandomScraps_Unused3','0603E4EA',0,'Random pinup scraps unused 3'],['PinupRandomScraps_Unused4','060435EC',0,'Random pinup scraps unused 4'],['pinupRelicFight','0602A066',1,'Candice vs Croft: Relic Fight','BasicBook06a','1.00',1],['PinupScrapbook','060393D6',1,'Scrapbook of Pinups']);
['A7','A9','AA','AB','AC','AD','B9','BA','BB'].forEach((x, i) => rows.push(['PinupThalmor0' + (i || ''), '060393' + x, i ? 1 : 0, 'Altmer Lust 0' + i]));
const book = '<svg viewBox="0 0 15 16"><path d="M1 3l6-2v12l-6-2z" fill="#7a0c10"/><path d="M7 2l2 1v12l-8-4 6 2z" fill="#4a0508"/><path d="M7 1l7 3v10l-5 1V4z" fill="#fff" stroke="#a33" stroke-width=".8"/><path d="M11 5v8" stroke="#bbb"/><path d="M3 5l2-1M3 8l2-1M3 10l2 0" stroke="#d9a55a"/></svg>';
const blank = n => '<td></td>'.repeat(n);
document.querySelector('#forms tbody').innerHTML = '<tr class="gap">' + blank(11) + '</tr>' + rows.map(r => {
  const id = `<td class="ico">${book}${r[0]}</td>`;
  if (!r[1]) return `<tr>${id}${blank(10)}</tr>`;
  return `<tr class="${r[0].endsWith('Unused3') ? 'on' : ''}">${id}<td class="ctr">${r[1]}</td><td class="ctr">0 *</td><td class="ctr">${r[2]}</td><td>Clutter\\Books\\${r[4] || 'Note02'}.nif</td><td class="ctr">0</td><td>${r[3]}</td><td></td><td class="ctr">${r[5] || '0.00'}</td><td class="ctr">${r[6] || 0}</td><td></td></tr>`;
}).join('');
document.querySelector('#cells tbody').innerHTML = '<tr class="gap">' + blank(6) + '</tr>' + ('<tr>' + blank(6) + '</tr>').repeat(39);
document.querySelector('#kw tbody').innerHTML = '<tr class="gap">' + blank(3) + '</tr><tr><td class="px-1">VendorItemBook</td><td class="p-0"></td><td class="p-0">(...</td></tr>' + ('<tr><td></td><td class="p-0"></td><td></td></tr>').repeat(7);

document.getElementById('f-txt').scrollTop = 5;
const id = document.getElementById('f-id');
id.focus({preventScroll: true});
id.style.outline = 'none';
id.select();
</script>
</body>
</html>
